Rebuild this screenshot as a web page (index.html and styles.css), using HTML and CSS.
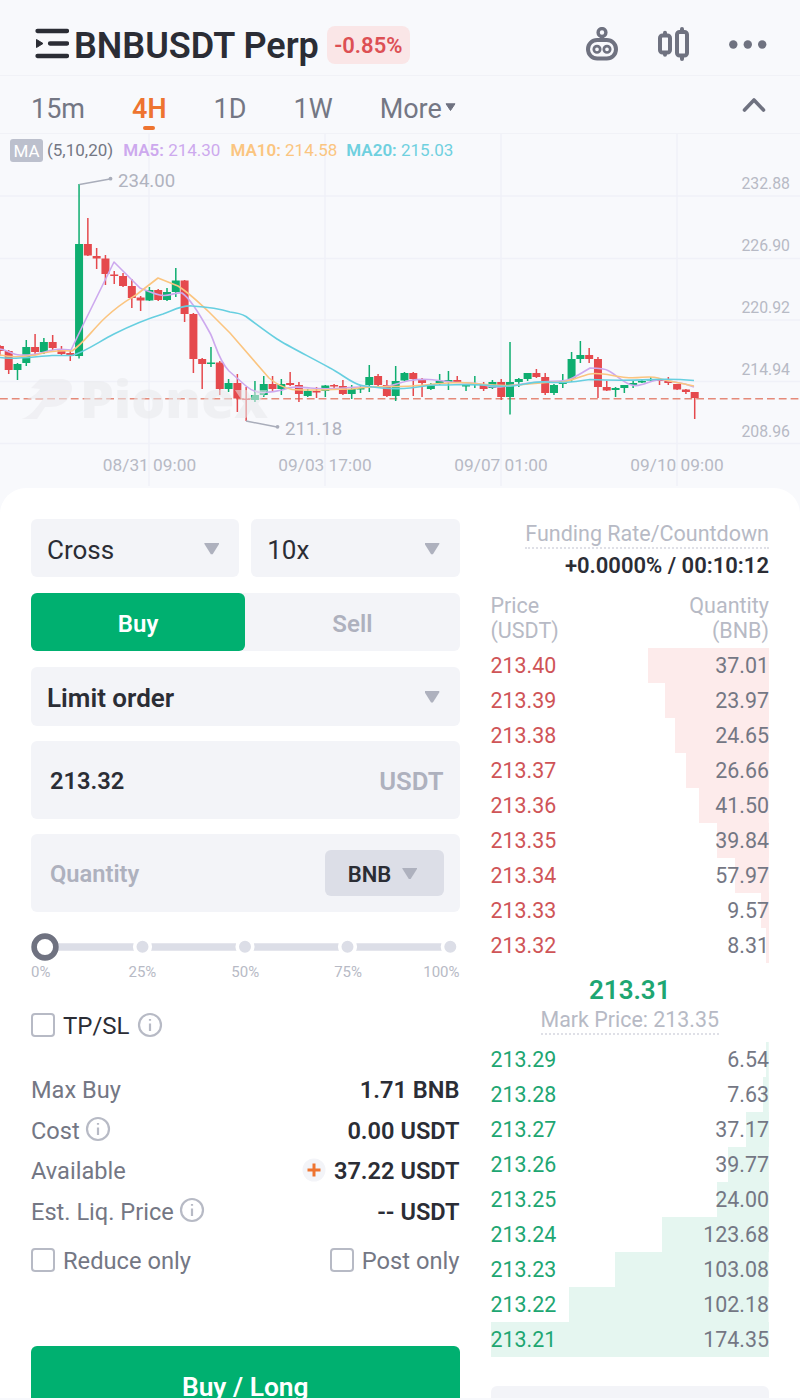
FILE: index.html
```html
<!DOCTYPE html>
<html lang="en">
<head>
    <meta charset="UTF-8">
    <meta name="viewport" content="width=device-width, initial-scale=1.0">
    <title>BNBUSDT Perp</title>
    <link rel="stylesheet" href="styles.css">
</head>
<body>
    <div class="screen">
        <header class="header">
            <svg class="menu-icon" width="34" height="32" viewBox="0 0 34 32">
                <path d="M2.500 3H32M15 15.500H32M2.500 28H32" stroke="#2b2d35" stroke-width="4.300" stroke-linecap="round"/>
                <path d="M1.500 11.500L8 15.500L1.500 19.500Z" fill="#2b2d35" stroke="#2b2d35" stroke-linejoin="round"/>
            </svg>
            <h1 class="pair">BNBUSDT Perp</h1>
            <span class="change">-0.85%</span>
            <div class="header-icons">
                <svg width="34" height="36" viewBox="0 0 34 36" fill="none" stroke="#6f7280">
                    <circle cx="17" cy="5.500" r="3.900" stroke-width="3.400"/>
                    <path d="M17 9.500V13" stroke-width="4"/>
                    <rect x="3" y="13" width="28" height="18.500" rx="9.200" stroke-width="4"/>
                    <circle cx="12" cy="22.300" r="3.200" stroke-width="2.700"/>
                    <circle cx="22" cy="22.300" r="3.200" stroke-width="2.700"/>
                </svg>
                <svg width="34" height="36" viewBox="0 0 34 36" fill="none" stroke="#6f7280" stroke-width="4" stroke-linecap="round">
                    <rect x="3" y="8.500" width="10" height="17" rx="2.500"/>
                    <path d="M8 5.800V8M8 26V27.800"/>
                    <rect x="20" y="5" width="10" height="23.500" rx="2.500"/>
                    <path d="M25 2V5M25 29V32"/>
                </svg>
                <svg width="38" height="10" viewBox="0 0 38 10" fill="#6f7280">
                    <circle cx="4.300" cy="4.500" r="4.200"/>
                    <circle cx="18.800" cy="4.500" r="4.200"/>
                    <circle cx="33.200" cy="4.500" r="4.200"/>
                </svg>
            </div>
        </header>

        <nav class="tabs">
            <span class="tab">15m</span>
            <span class="tab active">4H</span>
            <span class="tab">1D</span>
            <span class="tab">1W</span>
            <span class="tab more">More
                <svg width="11" height="9" viewBox="0 0 11 9"><path d="M1 .8H10L5.500 7.500Z" fill="#6f7280" stroke="#6f7280" stroke-linejoin="round"/></svg>
            </span>
            <svg class="collapse" width="24" height="16" viewBox="0 0 24 16"><path d="M2.500 13L12 3L21.500 13" fill="none" stroke="#6f7280" stroke-width="3.600" stroke-linecap="round" stroke-linejoin="round"/></svg>
        </nav>

        <section class="chart">
            <div class="legend">
                <span class="badge">MA</span>
                <span class="params">(5,10,20)</span>
                <span class="ma5"><b>MA5:</b> 214.30</span>
                <span class="ma10"><b>MA10:</b> 214.58</span>
                <span class="ma20"><b>MA20:</b> 215.03</span>
            </div>
            <svg class="plot" width="800" height="354" viewBox="0 134 800 354">
                <path class="grid" d="M0 196H800M0 258.500H800M0 320H800M0 381.500H800M0 443.500H800M149 134V486M325 134V486M501 134V486M677 134V486"/>
                <line class="last-price" x1="0" y1="398.700" x2="800" y2="398.700"/>
                <g id="candles"></g>
                <path class="line ma5-line" d="M0 349C8 350 12 355 20 355C35 356 42 352 53 350C60 348 64 350 71 350L84 323L114 262L140 288C150 292 156 295 163 295.500S176 292 182 293C190 298 204 322 210 333C215 342 218 360 229 371L246 386Q254 393 264 392.500T282 390C292 386 300 387 310 388S330 389 345 388S366 386 378 387S396 383 410 380.500S436 380 450 382S470 381 484 385S502 386 514 385S538 381 560 381C570 381 580 374 590 368C598 368 604 368 609 371C618 376 624 384 634 385.500S652 378 664 380L685 384L694 387"/>
                <path class="line ma10-line" d="M0 355C12 358 24 357 36 355C46 352 56 350 72 351C84 343 92 330 106 317S126 301 136 295L158 278L178 286C192 295 200 304 209 312L230 333L269 378Q280 387 292 389.500C312 391 336 389 352 389C370 386 390 387 412 386S450 381 470 383S494 386 510 385.500S538 382 562 382C572 381 580 376 590 374S612 376 626 377.500S648 375 658 378S680 383 694 386"/>
                <path class="line ma20-line" d="M0 357.500C15 360 38 356 52 355.500L72 355.500C85 352 100 341 114 334S140 321 163 314C174 310 182 305 192 306C208 307 218 308 230 312Q240 313 246 316.500C256 324 268 333 277 339S310 357 330 368C342 374 352 384 362 385.500S390 390 410 388S424 385 440 385S466 384 482 385S500 387 512 386S532 381 546 382S568 383 590 379.500C620 381 640 380 652 379.500S678 379 694 380.500"/>
                <!-- watermark -->
                <path class="mark" d="M40 379H61C72 379 75 388 69 397C65 404 58 407 50 407H45L37 419H22C31 416 38 406 43 399H27C34 396 37 393 40 389L31 388Z"/>
                <text class="mark mark-text" x="80" y="418" textLength="188" lengthAdjust="spacingAndGlyphs">Pionex</text>
                <!-- high / low callouts -->
                <path class="callout" d="M79.500 184.500L110 179M246 421L277 427"/>
                <circle class="dot" cx="110.500" cy="178.700" r="1.900"/>
                <circle class="dot" cx="277.500" cy="426.800" r="1.900"/>
                <text class="extreme" x="118" y="187">234.00</text>
                <text class="extreme" x="285" y="435">211.18</text>
                <g class="price-axis">
                    <text x="790" y="189">232.88</text>
                    <text x="790" y="251">226.90</text>
                    <text x="790" y="313">220.92</text>
                    <text x="790" y="375">214.94</text>
                    <text x="790" y="437">208.96</text>
                </g>
                <g class="time-axis">
                    <text x="149.500" y="471">08/31 09:00</text>
                    <text x="325" y="471">09/03 17:00</text>
                    <text x="501" y="471">09/07 01:00</text>
                    <text x="677" y="471">09/10 09:00</text>
                </g>
            </svg>
        </section>

        <main class="panel">
            <form class="order">
                <div class="selects">
                    <div class="field select">Cross <i class="arrow"></i></div>
                    <div class="field select">10x <i class="arrow"></i></div>
                </div>
                <div class="side">
                    <span class="side-btn buy">Buy</span>
                    <span class="side-btn">Sell</span>
                </div>
                <div class="field select type">Limit order <i class="arrow"></i></div>
                <div class="field input price"><span>213.32</span><span class="unit">USDT</span></div>
                <div class="field input qty"><span>Quantity</span><span class="coin">BNB <i class="arrow"></i></span></div>

                <div class="slider">
                    <svg width="428" height="28" viewBox="0 0 428 28">
                        <path d="M14 14H419" stroke="#dcdee7" stroke-width="7.500"/>
                        <g fill="#dcdee7" stroke="#fff" stroke-width="3.600">
                            <circle cx="111.500" cy="13.700" r="7.800"/>
                            <circle cx="214" cy="13.700" r="7.800"/>
                            <circle cx="316.500" cy="13.700" r="7.800"/>
                            <circle cx="419.300" cy="13.700" r="7.800"/>
                        </g>
                        <circle cx="14" cy="14" r="10.900" fill="#fff" stroke="#6f7280" stroke-width="5.600"/>
                    </svg>
                    <div class="ticks"><span>0%</span><span>25%</span><span>50%</span><span>75%</span><span>100%</span></div>
                </div>

                <label class="check tpsl"><i class="box"></i>TP/SL
                    <svg class="info" width="26" height="26" viewBox="0 0 26 26"><circle cx="13" cy="13" r="11"/><path d="M13 11.500V19M13 7V8.800"/></svg>
                </label>

                <div class="rows">
                    <div class="row"><span>Max Buy</span><b>1.71 BNB</b></div>
                    <div class="row"><span>Cost<svg class="info" width="26" height="26" viewBox="0 0 26 26"><circle cx="13" cy="13" r="11"/><path d="M13 11.500V19M13 7V8.800"/></svg></span><b>0.00 USDT</b></div>
                    <div class="row"><span>Available</span><b><svg class="plus" width="24" height="24" viewBox="0 0 24 24"><circle cx="12" cy="12" r="11.500" fill="#f3f4f8"/><path d="M12 5.500V18.500M5.500 12H18.500" stroke="#ee7430" stroke-width="3"/></svg>37.22 USDT</b></div>
                    <div class="row"><span>Est. Liq. Price<svg class="info" width="26" height="26" viewBox="0 0 26 26"><circle cx="13" cy="13" r="11"/><path d="M13 11.500V19M13 7V8.800"/></svg></span><b>-- USDT</b></div>
                </div>

                <div class="options">
                    <label class="check"><i class="box"></i>Reduce only</label>
                    <label class="check"><i class="box"></i>Post only</label>
                </div>
                <div class="submit">Buy / Long</div>
            </form>

            <aside class="book">
                <div class="funding"><span class="dotted">Funding Rate/Countdown</span></div>
                <div class="countdown">+0.0000% / 00:10:12</div>
                <div class="book-head"><span>Price<br>(USDT)</span><span>Quantity<br>(BNB)</span></div>
                <div class="levels asks">
                    <div class="level" style="background-size: 43.6% 100%"><span>213.40</span><span>37.01</span></div>
                    <div class="level" style="background-size: 37.5% 100%"><span>213.39</span><span>23.97</span></div>
                    <div class="level" style="background-size: 33.8% 100%"><span>213.38</span><span>24.65</span></div>
                    <div class="level" style="background-size: 29.8% 100%"><span>213.37</span><span>26.66</span></div>
                    <div class="level" style="background-size: 25.1% 100%"><span>213.36</span><span>41.50</span></div>
                    <div class="level" style="background-size: 18.7% 100%"><span>213.35</span><span>39.84</span></div>
                    <div class="level" style="background-size: 12.2% 100%"><span>213.34</span><span>57.97</span></div>
                    <div class="level" style="background-size: 2.9% 100%"><span>213.33</span><span>9.57</span></div>
                    <div class="level" style="background-size: 1.2% 100%"><span>213.32</span><span>8.31</span></div>
                </div>
                <div class="last">213.31</div>
                <div class="mark-price"><span class="dotted">Mark Price: 213.35</span></div>
                <div class="levels bids">
                    <div class="level" style="background-size: 1% 100%"><span>213.29</span><span>6.54</span></div>
                    <div class="level" style="background-size: 2.1% 100%"><span>213.28</span><span>7.63</span></div>
                    <div class="level" style="background-size: 8.4% 100%"><span>213.27</span><span>37.17</span></div>
                    <div class="level" style="background-size: 14.7% 100%"><span>213.26</span><span>39.77</span></div>
                    <div class="level" style="background-size: 18.7% 100%"><span>213.25</span><span>24.00</span></div>
                    <div class="level" style="background-size: 38.6% 100%"><span>213.24</span><span>123.68</span></div>
                    <div class="level" style="background-size: 55.3% 100%"><span>213.23</span><span>103.08</span></div>
                    <div class="level" style="background-size: 71.8% 100%"><span>213.22</span><span>102.18</span></div>
                    <div class="level" style="background-size: 100% 100%"><span>213.21</span><span>174.35</span></div>
                </div>
                <div class="field precision">0.01</div>
            </aside>
        </main>
    </div>
    <script src="script.js"></script>
</body>
</html>
```

FILE: styles.css
```css
* {
    box-sizing: border-box;
}
body {
    margin: 0;
    background-color: #f8f9fc;
    color: #2b2d35;
    font-family: Roboto, "Liberation Sans", sans-serif;
}
.screen {
    width: 800px;
    height: 1398px;
    overflow: hidden;
}

/* header */
.header {
    display: flex;
    align-items: center;
    height: 76px;
    padding: 14px 33px 0 35px;
    border-bottom: 1px solid #f1f2f7;
}
.menu-icon {
    margin-top: -1px;
}
.pair {
    margin: 3px 0 0 5px;
    font-size: 36px;
    line-height: 44px;
    font-weight: 600;
    white-space: nowrap;
}
.change {
    margin-left: 8px;
    width: 83px;
    height: 38px;
    border-radius: 8px;
    background-color: #fae6e7;
    color: #dd5054;
    font-size: 22px;
    line-height: 40px;
    font-weight: 600;
    text-align: center;
}
.header-icons {
    display: flex;
    align-items: center;
    gap: 38px;
    margin-left: auto;
}

/* intervals */
.tabs {
    display: flex;
    align-items: center;
    height: 58px;
    padding: 8px 34px 0 31px;
    border-bottom: 1px solid #f1f2f7;
    color: #747784;
    font-size: 27px;
}
.tab {
    margin-right: 47px;
}
.tab.active {
    position: relative;
    color: #ee7430;
    font-weight: 600;
}
.tab.active::after {
    content: "";
    position: absolute;
    left: 50%;
    bottom: -5px;
    width: 12px;
    height: 4px;
    margin-left: -6px;
    border-radius: 2px;
    background-color: #ee7430;
}
.tab.more {
    display: flex;
    align-items: center;
    gap: 3px;
    margin-right: 0;
}
.more svg {
    margin-top: -2px;
}
.collapse {
    margin: -8px 0 0 auto;
}

/* chart */
.chart {
    display: grid;
}
.chart > * {
    grid-area: 1 / 1;
}
.legend {
    z-index: 1;
    display: flex;
    align-items: center;
    align-self: start;
    margin-top: 4px;
    padding-left: 10px;
    font-size: 17px;
    line-height: 24px;
}
.badge {
    width: 33px;
    height: 23px;
    border-radius: 3px;
    background-color: #bcc0cd;
    color: #fff;
    line-height: 24px;
    text-align: center;
}
.params {
    margin-left: 4px;
    color: #747784;
}
.ma5 {
    margin-left: 10px;
    color: #cda9ee;
}
.ma10 {
    margin-left: 10px;
    color: #fbc580;
}
.ma20 {
    margin-left: 9px;
    color: #6fd0df;
}
.legend b {
    font-weight: 600;
}
.plot {
    display: block;
}
.grid {
    fill: none;
    stroke: #f0f1f8;
    stroke-width: 1.5;
}
.last-price {
    stroke: #e58a79;
    stroke-width: 1.5;
    stroke-dasharray: 7.8 4;
}
.up {
    fill: #0fae70;
}
.down {
    fill: #e5494d;
}
.line {
    fill: none;
    stroke-width: 1.6;
    stroke-linejoin: round;
}
.ma5-line {
    stroke: #cda9ee;
}
.ma10-line {
    stroke: #fbc580;
}
.ma20-line {
    stroke: #67cfe0;
}
.mark {
    fill: #e9eaec;
    opacity: 0.55;
}
.mark-text {
    font-family: "Open Sans", Roboto, sans-serif;
    font-size: 51px;
    font-weight: 800;
}
.callout {
    fill: none;
    stroke: #a9adba;
    stroke-width: 1.5;
}
.dot {
    fill: #a9adba;
}
.extreme {
    fill: #b0b3bf;
    font-size: 18.6px;
}
.price-axis {
    fill: #b7bac5;
    font-size: 15.8px;
    text-anchor: end;
}
.time-axis {
    fill: #b7bac5;
    font-size: 17.3px;
    text-anchor: middle;
}

/* trading panel */
.panel {
    display: flex;
    gap: 31px;
    height: 960px;
    padding: 31.5px 31px 0;
    border-radius: 26px 26px 0 0;
    background-color: #fff;
}
.order {
    width: 428.5px;
    margin-top: -0.5px;
}
.field {
    border-radius: 6px;
    background-color: #f3f4f8;
}
.select {
    display: flex;
    justify-content: space-between;
    align-items: center;
    height: 58.4px;
    padding: 3px 20px 0 16px;
    font-size: 26px;
}
.arrow {
    width: 15px;
    height: 12px;
    margin-top: -2px;
    background-color: #aeb1be;
    clip-path: polygon(3% 0, 97% 0, 100% 8%, 56% 96%, 44% 96%, 0 8%);
}
.selects {
    display: grid;
    grid-template-columns: 1fr 1fr;
    gap: 12px;
}
.side {
    display: grid;
    grid-template-columns: 1fr 1fr;
    margin: 16px 0;
    border-radius: 6px;
    background-color: #f3f4f8;
}
.side-btn {
    height: 58px;
    border-radius: 6px;
    color: #aeb1be;
    font-size: 24px;
    line-height: 62px;
    font-weight: 600;
    text-align: center;
}
.side-btn.buy {
    background-color: #00b070;
    color: #fff;
}
.type {
    font-weight: 600;
}
.input {
    display: flex;
    justify-content: space-between;
    align-items: center;
    height: 77.5px;
    margin-top: 15.5px;
    padding: 2px 16px 0 19px;
    font-size: 23.7px;
    font-weight: 600;
}
.unit {
    color: #aeb1be;
    font-size: 25.7px;
}
.qty {
    color: #aeb1be;
}
.coin {
    display: flex;
    justify-content: center;
    align-items: center;
    gap: 11px;
    width: 119px;
    height: 46px;
    margin-top: -2px;
    padding: 2px 3px 0 0;
    border-radius: 6px;
    background-color: #dcdee7;
    color: #2b2d35;
    font-size: 22px;
}
.coin .arrow {
    margin-top: -1px;
}
.slider {
    margin-top: 20.8px;
}
.slider svg {
    display: block;
}
.ticks {
    display: grid;
    grid-template-columns: 60px 1fr 1fr 1fr 60px;
    margin-top: 3px;
    color: #b7bac5;
    font-size: 15px;
    line-height: 16px;
    text-align: center;
}
.ticks span:first-child {
    text-align: left;
}
.ticks span:last-child {
    text-align: right;
}
.check {
    display: flex;
    align-items: center;
    font-size: 24px;
    line-height: 28px;
}
.box {
    width: 24px;
    height: 24px;
    margin: -1px 8px 0 0;
    border: 2px solid #b7bac5;
    border-radius: 4px;
}
.info {
    fill: none;
    stroke: #b7bac5;
    stroke-width: 2.2;
}
.tpsl {
    margin-top: 32px;
}
.tpsl .info {
    margin: -2px 0 0 7px;
}
.rows {
    margin-top: 30.3px;
}
.row {
    display: flex;
    justify-content: space-between;
    align-items: center;
    height: 40.6px;
    color: #747784;
    font-size: 23.6px;
}
.row span {
    display: flex;
    align-items: center;
}
.row b {
    display: flex;
    align-items: center;
    color: #2b2d35;
    font-weight: 600;
}
.row .info {
    margin: -3px 0 0 5px;
}
.plus {
    margin: -2px 8px 0 0;
}
.options {
    display: flex;
    justify-content: space-between;
    margin-top: 14.5px;
    color: #747784;
}
.options .check {
    font-size: 23.7px;
}
.submit {
    height: 80px;
    margin-top: 71.5px;
    border-radius: 6px;
    background-color: #00b070;
    color: #fff;
    font-size: 26.4px;
    line-height: 82px;
    font-weight: 600;
    text-align: center;
}

/* order book */
.book {
    width: 278.5px;
}
.funding {
    height: 33px;
    color: #b7bac5;
    font-size: 21.5px;
    line-height: 27px;
    text-align: right;
}
.dotted {
    display: inline-block;
    border-bottom: 2px dotted #dfe0e7;
}
.countdown {
    font-size: 22px;
    line-height: 26px;
    font-weight: 600;
    text-align: right;
    white-space: nowrap;
}
.book-head {
    display: flex;
    justify-content: space-between;
    margin: 14px 0 5px;
    color: #b7bac5;
    font-size: 21.5px;
    line-height: 25px;
}
.book-head span:last-child {
    text-align: right;
}
.level {
    display: flex;
    justify-content: space-between;
    height: 35.05px;
    background-repeat: no-repeat;
    background-position: right top;
    color: #747784;
    font-size: 21.4px;
    line-height: 36px;
}
.asks .level {
    background-image: linear-gradient(#fdebeb, #fdebeb);
}
.bids .level {
    background-image: linear-gradient(#e5f6f0, #e5f6f0);
}
.asks .level span:first-child {
    color: #cf5457;
}
.bids .level span:first-child {
    color: #1ea672;
}
.last {
    margin-top: 11px;
    color: #1ea672;
    font-size: 26px;
    line-height: 32px;
    font-weight: 600;
    text-align: center;
}
.mark-price {
    height: 36px;
    color: #b7bac5;
    font-size: 21.4px;
    line-height: 28px;
    text-align: center;
}
.mark-price .dotted {
    line-height: 27px;
}
.precision {
    height: 58px;
    margin-top: 29px;
    padding-left: 17px;
    font-size: 26px;
    line-height: 44px;
}
```

FILE: script.js
```js
// 4H candles: [direction, high, body top, body bottom, low]
const candles = [
    ['d', 345, 346, 351, 356], ['d', 350, 351, 370, 374], ['u', 363, 364, 370, 380], ['u', 340, 347, 363, 366],
    ['d', 334, 347, 352, 355], ['u', 338, 342, 352, 354], ['d', 335, 342, 348, 350], ['d', 346, 349, 354, 356],
    ['d', 350, 353, 356, 361], ['u', 184, 244, 356, 358.5], ['d', 218, 244, 255.5, 256], ['d', 248, 256, 258.5, 269],
    ['d', 255, 258.5, 274, 285], ['d', 271, 274.5, 276, 284], ['d', 273, 276, 286, 287], ['d', 279, 286, 298, 308],
    ['d', 296, 297.5, 300.5, 311], ['u', 287, 290, 300.5, 301], ['d', 289, 290, 300, 301], ['u', 288, 292, 300, 301],
    ['u', 268, 280.5, 292, 297], ['d', 280, 280.5, 314, 322], ['d', 313, 314, 359, 373], ['d', 358, 359, 364, 389],
    ['u', 347, 362.5, 364, 367], ['d', 361, 362.5, 389, 395], ['u', 379, 383, 389, 392], ['d', 374, 383, 398.5, 412],
    ['d', 387, 398.5, 400, 421], ['u', 381, 395, 400, 402], ['u', 376, 384, 395, 397], ['d', 376, 384, 389, 391],
    ['u', 379, 384, 389, 395], ['d', 372, 383, 385, 386], ['d', 382, 385, 394, 402], ['u', 389, 391, 396, 397],
    ['d', 387, 391, 392, 398], ['u', 385, 385.5, 391, 397], ['d', 384, 385, 386, 389], ['d', 380, 386, 394, 395],
    ['u', 385, 389, 394, 399], ['u', 385, 388, 389, 393], ['u', 365, 377, 385, 392], ['d', 374, 376, 385, 386],
    ['d', 380, 385, 396, 397], ['u', 366, 381, 396, 401], ['u', 372, 373, 380.5, 381], ['d', 372, 373, 379, 396],
    ['d', 378, 379, 383, 397], ['u', 383, 385, 389, 390], ['u', 374, 381, 383, 385], ['u', 371, 380, 382, 390],
    ['d', 376, 380, 383, 383], ['u', 384, 385, 386, 391], ['u', 376, 383, 384, 388], ['d', 382, 385, 389, 391],
    ['u', 380, 382, 388, 389], ['d', 379, 382, 397, 400], ['u', 342, 382, 397, 414.5], ['u', 378, 379, 382, 387],
    ['u', 373, 373, 379, 381], ['d', 369, 373, 377, 378], ['d', 373, 377, 393, 395], ['u', 384, 385, 393, 395],
    ['u', 374, 381, 384, 388], ['u', 352, 359, 379, 382], ['u', 341, 355, 359, 363], ['d', 348, 355, 359, 363],
    ['d', 357, 359, 387, 398], ['d', 381, 387, 390.5, 391], ['u', 387, 388, 390, 397], ['u', 385, 385, 388, 393],
    ['u', 381, 383, 385, 388], ['u', 379, 381, 382.5, 383], ['u', 377, 379, 380, 382], ['d', 379, 379.5, 381, 385],
    ['d', 377, 381, 383, 385], ['d', 384, 384, 389.5, 390], ['d', 389, 389.5, 392, 394], ['d', 392, 392, 398, 419]
];

const step = 8.795;
const group = document.getElementById('candles');

function addRect(cls, x, y, width, height) {
    const rect = document.createElementNS('http://www.w3.org/2000/svg', 'rect');
    rect.setAttribute('class', cls);
    rect.setAttribute('x', x);
    rect.setAttribute('y', y);
    rect.setAttribute('width', width);
    rect.setAttribute('height', height);
    group.appendChild(rect);
}

candles.forEach(([dir, high, top, bottom, low], i) => {
    const x = i * step - 0.1;
    const cls = dir === 'u' ? 'up' : 'down';
    addRect(cls, x - 0.75, high, 1.5, low - high);
    addRect(cls, x - 4, top, 8, Math.max(bottom - top, 1.5));
});
```
